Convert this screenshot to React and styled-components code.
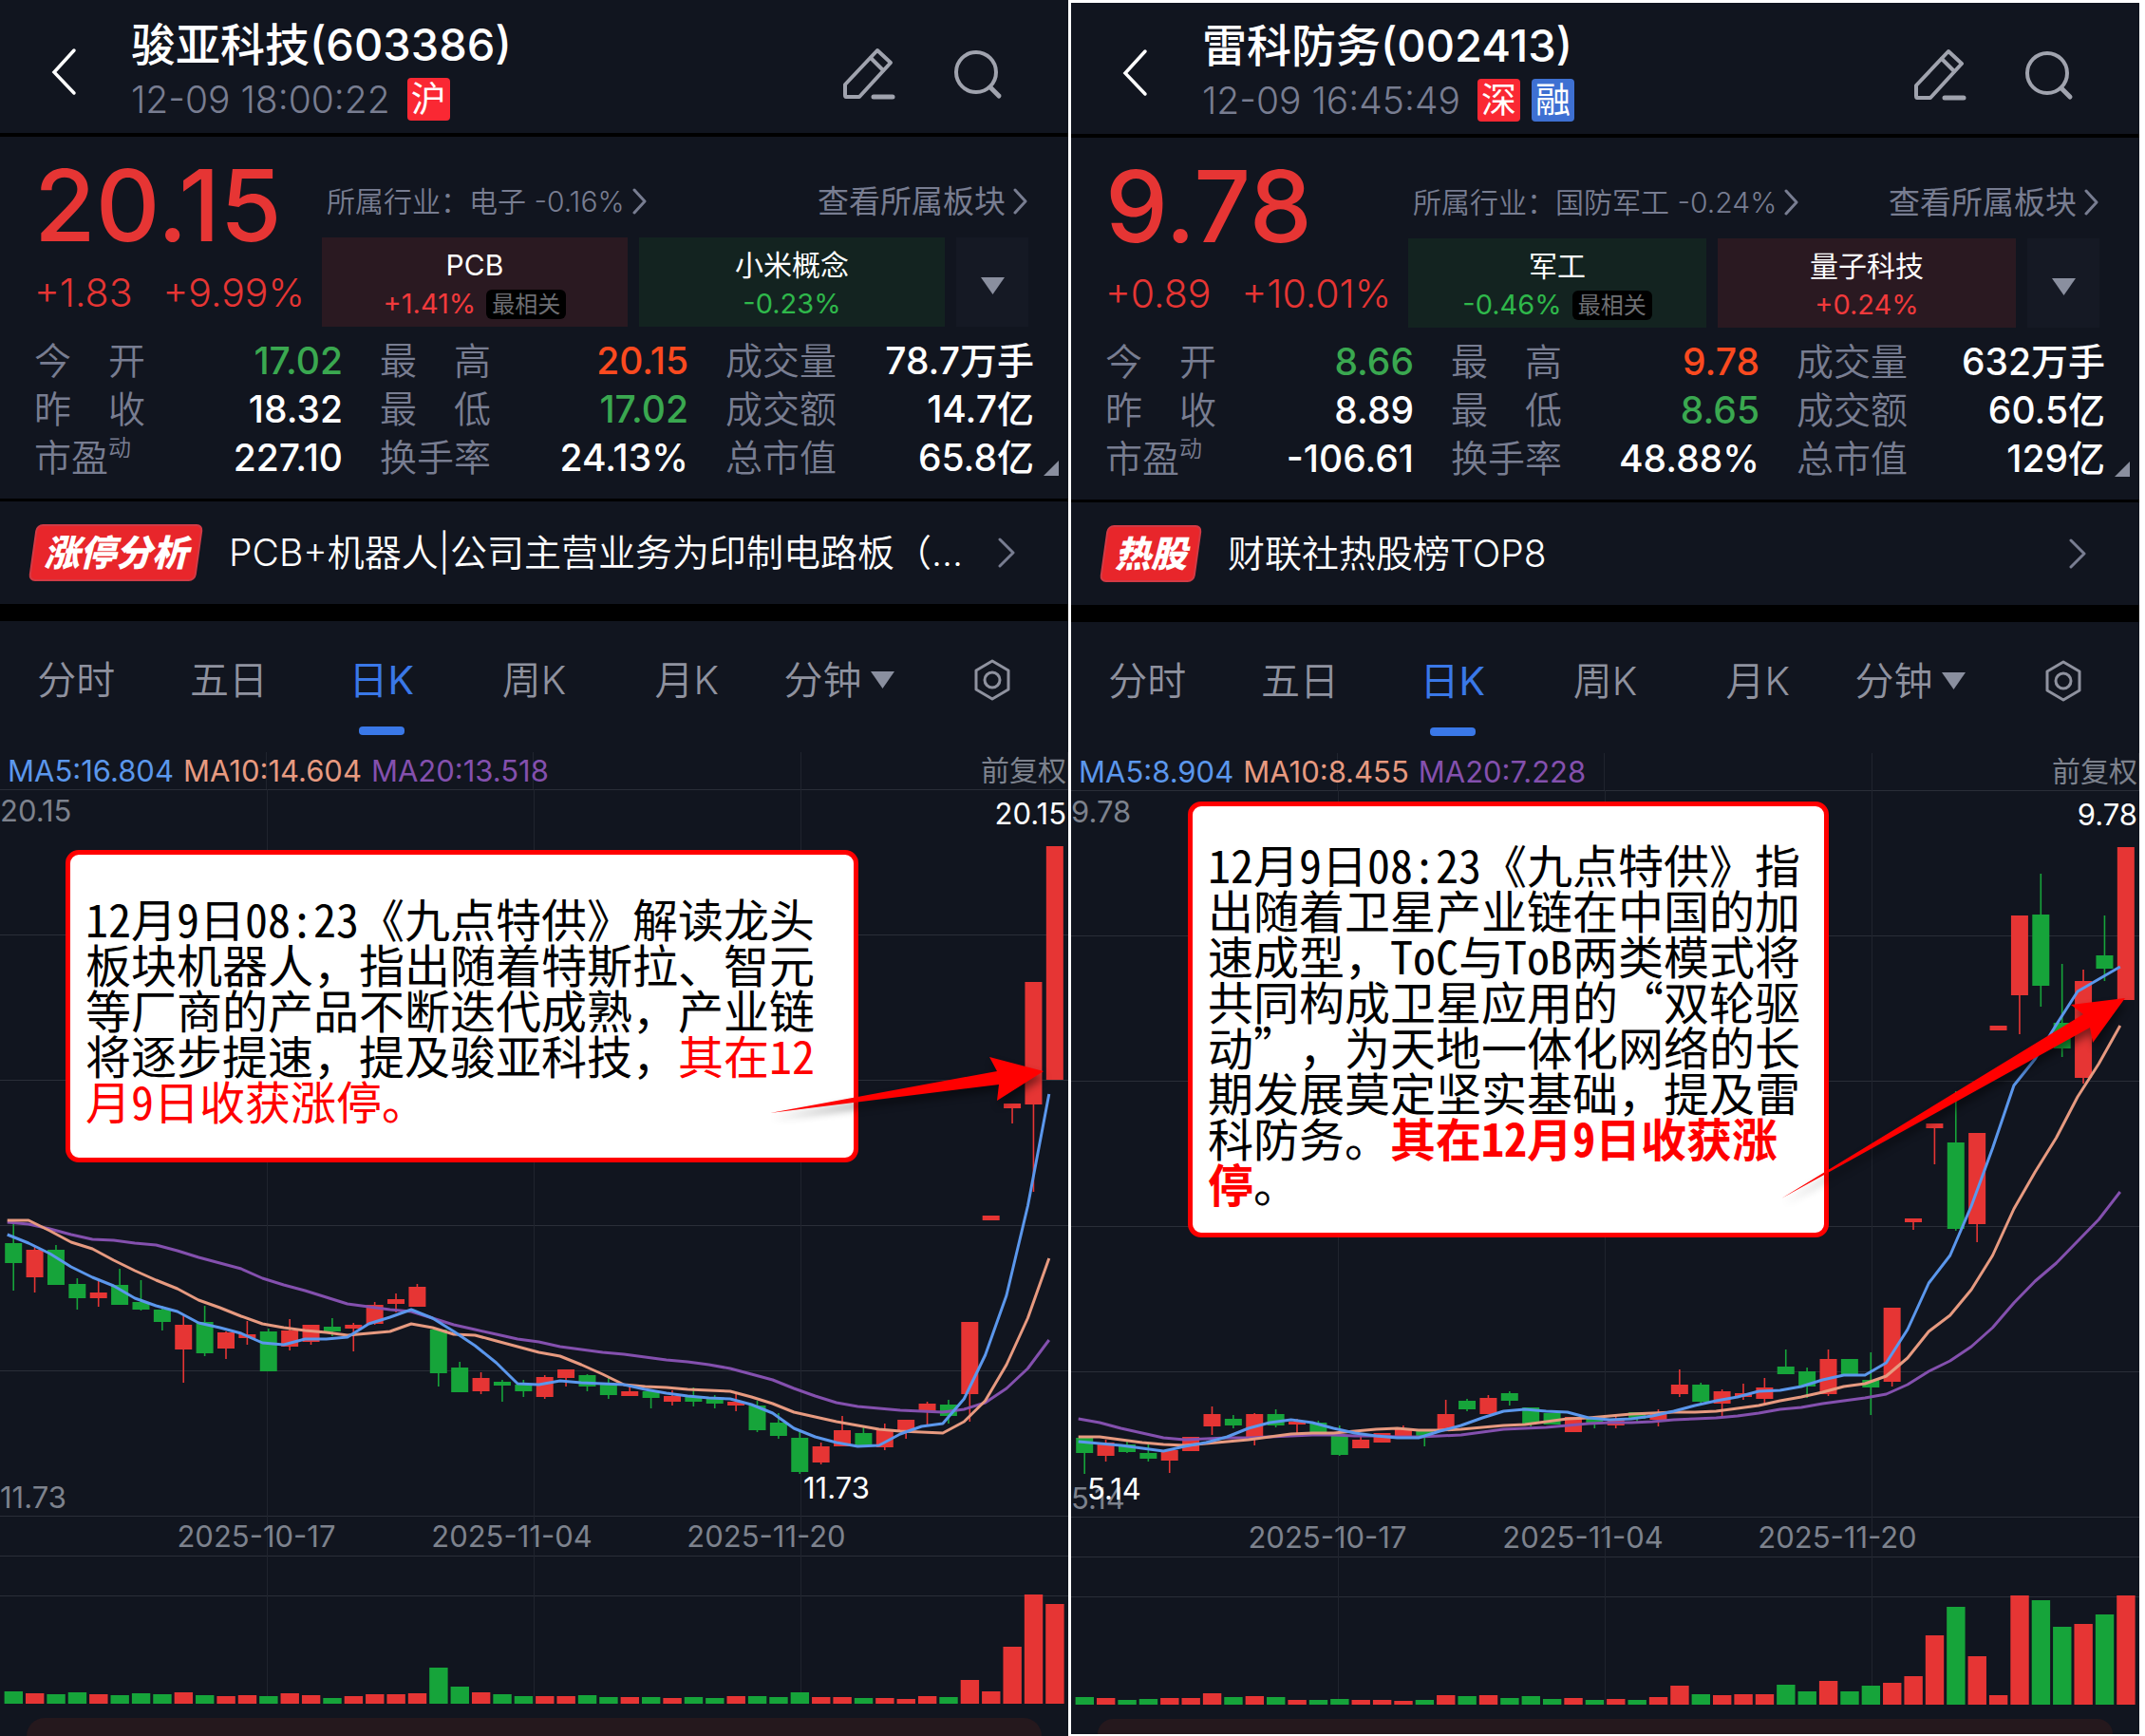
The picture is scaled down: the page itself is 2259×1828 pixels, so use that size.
import React from 'react';
import styled, { createGlobalStyle } from 'styled-components';

const color = {
  bg: '#11151f',
  red: '#e63534',
  hot: '#fb4a1f',
  green: '#3aa850',
  candleGreen: '#16a43a',
  muted: '#787d91',
  tab: '#8f929f',
  axis: '#7d828d',
  grid: '#2a2e38',
  blue: '#3a78e8',
  ma5: '#5b97ec',
  ma10: '#e79a80',
  ma20: '#8450ae',
};

const GlobalStyle = createGlobalStyle`
  * { box-sizing: border-box; }
  body {
    margin: 0;
    background: #fff;
    color: #fff;
    font-family: Inter, "Noto Sans CJK SC", sans-serif;
    text-spacing-trim: space-all;
  }
  button {
    border: 0;
    padding: 0;
    background: none;
    color: inherit;
    font: inherit;
    cursor: pointer;
  }
  a { color: inherit; text-decoration: none; }
  svg { display: block; }
  h1, dl, dd, p { margin: 0; }
`;

const Page = styled.main`
  display: grid;
  grid-template-columns: 1fr 1fr;
  gap: 3px;
  padding-right: 6px;
  min-height: 100vh;
`;

const Panel = styled.section`
  display: flex;
  flex-direction: column;
  min-width: 0;
  overflow: hidden;
  background: ${color.bg};
  margin: ${(p) => (p.$framed ? '3px 0 2px' : '0')};
`;

const Header = styled.header`
  display: flex;
  align-items: center;
  padding: ${(p) => (p.$framed ? 19 : 21)}px 63px 13px 48px;
  border-bottom: 4px solid #000;
`;

const IconButton = styled.button`
  flex: none;
`;

const Heading = styled.div`
  flex: 1;
  margin-left: 50px;
`;

const Title = styled.h1`
  font-size: 47px;
  line-height: 52px;
  font-weight: 450;
`;

const SubLine = styled.div`
  display: flex;
  align-items: center;
  gap: 12px;
  margin-top: 9px;
  color: ${color.muted};
`;

const Time = styled.time`
  margin-right: 6px;
  font-size: 39px;
  line-height: 45px;
  font-weight: 300;
`;

const MarketTag = styled.span`
  width: 45px;
  font-size: 37px;
  line-height: 45px;
  text-align: center;
  border-radius: 4px;
  color: #fff;
  background: ${(p) => (p.$tone === 'blue' ? '#3e70d2' : '#fa2833')};
`;

const Actions = styled.div`
  display: flex;
  gap: 52px;
`;

const Quote = styled.div`
  position: relative;
  padding: 22px 0 18px;
  border-bottom: 3px solid #000;
`;

const Summary = styled.div`
  display: flex;
  gap: 18px;
  padding: 0 42px 0 36px;
`;

const Price = styled.div`
  color: ${color.red};
  font-size: 105px;
  line-height: 100px;
  font-weight: 500;
`;

const Change = styled.div`
  display: flex;
  gap: 32px;
  margin-top: 16px;
  color: ${color.red};
  font-size: 41px;
  line-height: 52px;
  font-weight: 300;
`;

const Sectors = styled.div`
  flex: 1;
  min-width: 0;
  padding-top: 22px;
`;

const SectorLinks = styled.div`
  display: flex;
  justify-content: space-between;
  padding-left: 5px;
  color: ${color.muted};
  line-height: 48px;
`;

const SectorLink = styled.a`
  display: flex;
  align-items: center;
  gap: 8px;
  font-size: ${(p) => (p.$large ? 33 : 30)}px;
  font-weight: ${(p) => (p.$large ? 400 : 350)};
`;

const Cards = styled.div`
  display: flex;
  gap: 12px;
  margin-top: 14px;
`;

const Card = styled.button`
  flex: 1;
  padding: 8px 0 4px;
  background: ${(p) => (p.$up ? '#2a1921' : '#132320')};
  font-size: 30px;
  line-height: 42px;
`;

const CardChange = styled.span`
  display: flex;
  justify-content: center;
  align-items: center;
  gap: 11px;
  line-height: 40px;
  font-size: 29px;
  color: ${(p) => (p.$up ? '#f23a3c' : '#2fb84b')};
`;

const Closest = styled.span`
  padding: 0 6px;
  border-radius: 6px;
  background: #000;
  color: #6d6e72;
  font-size: 24px;
  line-height: 31px;
`;

const MoreButton = styled.button`
  display: grid;
  place-items: center;
  width: 76px;
  padding-top: 8px;
  background: #151924;
`;

const Stats = styled.dl`
  display: grid;
  grid-template-columns: repeat(3, 1fr);
  column-gap: 39px;
  padding: 0 36px 0 36px;
  margin-top: 10px;
`;

const Stat = styled.div`
  display: flex;
  justify-content: space-between;
  font-size: 39px;
  line-height: 51px;
`;

const StatLabel = styled.dt`
  width: 117px;
  color: ${color.muted};
  font-weight: 350;
  text-align-last: ${(p) => (p.$spread ? 'justify' : 'left')};
  white-space: nowrap;
`;

const Small = styled.sup`
  font-size: 24px;
  line-height: 1;
  vertical-align: 16px;
`;

const StatValue = styled.dd`
  color: ${(p) => color[p.$tone] || '#fff'};
  font-weight: 500;
`;

const Corner = styled.svg`
  position: absolute;
  right: 10px;
  bottom: 24px;
`;

const Notice = styled.a`
  display: flex;
  align-items: center;
  height: 108px;
  padding: 0 55px 0 34px;
`;

const NoticeTag = styled.span`
  position: relative;
  z-index: 0;
  padding: 0 12px;
  font-size: 38px;
  line-height: 60px;
  font-weight: 900;
  font-style: italic;
  white-space: nowrap;
  &::before {
    content: '';
    position: absolute;
    z-index: -1;
    inset: 0;
    border: 2px solid #d23a45;
    border-radius: 7px;
    background: #e8262b;
    transform: skewX(-8deg);
  }
`;

const NoticeText = styled.span`
  flex: 1;
  min-width: 0;
  margin-left: 31px;
  font-size: 39px;
  line-height: 56px;
  font-weight: 350;
  white-space: nowrap;
`;

const Tabs = styled.nav`
  display: grid;
  grid-template-columns: repeat(7, 1fr);
  padding: 32px 0 18px;
  border-top: 18px solid #000;
`;

const Tab = styled.button`
  display: flex;
  flex-direction: column;
  align-items: center;
  gap: 19px;
  color: ${(p) => (p.$active ? color.blue : color.tab)};
  font-size: 41px;
  line-height: 60px;
  font-weight: ${(p) => (p.$active ? 400 : 350)};
  &::after {
    content: '';
    width: 48px;
    height: 9px;
    border-radius: 4px;
    background: ${(p) => (p.$active ? color.blue : 'transparent')};
  }
`;

const TabLabel = styled.span`
  display: flex;
  align-items: center;
  gap: 10px;
  height: 60px;
  white-space: nowrap;
`;

const Legend = styled.div`
  display: flex;
  gap: 10px;
  padding: 0 2px 0 8px;
  font-size: 31px;
  line-height: 39px;
  background: repeating-linear-gradient(
    90deg,
    transparent 0 calc(25% - 1px),
    #20242e calc(25% - 1px) 25%
  );
`;

const LegendItem = styled.span`
  color: ${(p) => color[p.$tone]};
`;

const Adjust = styled.span`
  margin-left: auto;
  color: ${color.axis};
  font-size: 30px;
`;

const ChartArea = styled.div`
  position: relative;
`;

const ChartSvg = styled.svg`
  width: 100%;
  height: auto;
`;

const AxisText = styled.text`
  fill: ${(p) => (p.$bright ? '#fff' : color.axis)};
  font-size: 31px;
`;

const Callout = styled.p`
  position: absolute;
  top: ${(p) => p.$top}px;
  left: ${(p) => p.$left}px;
  width: ${(p) => p.$width}px;
  padding: ${(p) => p.$pad};
  border: 5px solid #f00;
  border-radius: 14px;
  background: #fff;
  color: #000;
  font-family: "Noto Sans CJK SC", sans-serif;
  font-size: 48px;
  line-height: 48px;
`;

const HalfWidth = styled.span`
  font-feature-settings: "hwid";
`;

const Mark = styled.span`
  color: #f00;
  font-weight: ${(p) => (p.$bold ? 700 : 400)};
`;

const ArrowSvg = styled.svg`
  position: absolute;
  inset: 0;
  width: 100%;
  height: 100%;
  pointer-events: none;
  filter: drop-shadow(2px 6px 4px rgba(0, 0, 0, 0.45));
`;

const Footer = styled.footer`
  flex: 1 0 16px;
  margin: 0 28px;
  border-radius: 20px 20px 0 0;
  background: #25181d;
`;

const TOP = 831;
const VIEW = '0 831 1125 978';
const STEP = 22.38;
const BASE = 1794;

/* Each candle: direction, body top, body bottom, wick top, wick bottom, volume */
const left = {
  name: '骏亚科技',
  code: '603386',
  time: '12-09 18:00:22',
  tags: [['沪', 'red']],
  price: '20.15',
  change: ['+1.83', '+9.99%'],
  industry: '电子',
  industryChange: '-0.16%',
  cards: [
    { name: 'PCB', change: '+1.41%', up: true, closest: true },
    { name: '小米概念', change: '-0.23%', up: false },
  ],
  stats: [
    ['今开', '17.02', 'green'], ['最高', '20.15', 'hot'], ['成交量', '78.7万手'],
    ['昨收', '18.32'], ['最低', '17.02', 'green'], ['成交额', '14.7亿'],
    ['市盈', '227.10'], ['换手率', '24.13%'], ['总市值', '65.8亿'],
  ],
  notice: ['涨停分析', 'PCB+机器人|公司主营业务为印制电路板（...'],
  ma: ['MA5:16.804', 'MA10:14.604', 'MA20:13.518'],
  high: '20.15',
  low: '11.73',
  lowAt: [846, 1578],
  candles: [
    ['g', 1309, 1330, 1289, 1359, 13], ['r', 1316, 1345, 1313, 1361, 11], ['g', 1316, 1353, 1311, 1353, 10],
    ['g', 1352, 1367, 1346, 1379, 12], ['r', 1361, 1367, 1348, 1376, 10], ['g', 1353, 1374, 1336, 1374, 9],
    ['g', 1371, 1379, 1348, 1380, 11], ['g', 1379, 1392, 1375, 1401, 10], ['r', 1395, 1421, 1384, 1456, 12],
    ['g', 1392, 1425, 1375, 1428, 9], ['r', 1403, 1420, 1402, 1431, 8], ['r', 1405, 1409, 1391, 1416, 9],
    ['g', 1402, 1444, 1399, 1444, 8], ['r', 1401, 1418, 1389, 1422, 11], ['r', 1395, 1413, 1395, 1416, 9],
    ['g', 1397, 1402, 1388, 1407, 6], ['r', 1395, 1399, 1393, 1423, 8], ['r', 1374, 1394, 1371, 1395, 10],
    ['r', 1368, 1373, 1362, 1382, 10], ['r', 1355, 1376, 1352, 1376, 11], ['g', 1400, 1446, 1400, 1460, 38],
    ['g', 1440, 1466, 1434, 1466, 18], ['r', 1451, 1465, 1445, 1468, 12], ['g', 1455, 1459, 1453, 1476, 10],
    ['g', 1458, 1465, 1453, 1471, 8], ['r', 1450, 1471, 1448, 1473, 8], ['r', 1442, 1451, 1442, 1460, 8],
    ['g', 1448, 1460, 1447, 1465, 9], ['g', 1458, 1469, 1450, 1473, 7], ['r', 1465, 1470, 1458, 1470, 7],
    ['g', 1465, 1472, 1463, 1483, 7], ['r', 1470, 1476, 1464, 1480, 6], ['g', 1470, 1476, 1461, 1481, 7],
    ['g', 1473, 1478, 1469, 1483, 6], ['r', 1476, 1480, 1468, 1486, 8], ['g', 1480, 1506, 1475, 1508, 8],
    ['g', 1498, 1512, 1488, 1515, 7], ['g', 1514, 1550, 1507, 1552, 12], ['r', 1523, 1540, 1519, 1542, 7],
    ['r', 1506, 1523, 1491, 1523, 7], ['g', 1509, 1522, 1503, 1522, 6], ['r', 1505, 1524, 1499, 1527, 6],
    ['r', 1495, 1506, 1495, 1515, 5], ['r', 1478, 1486, 1476, 1502, 8], ['g', 1479, 1491, 1474, 1499, 7],
    ['r', 1392, 1468, 1392, 1497, 25], ['r', 1280, 1285, 1280, 1285, 13], ['r', 1162, 1167, 1162, 1183, 60],
    ['r', 1034, 1163, 1034, 1255, 115], ['r', 891, 1137, 891, 1137, 105],
  ],
  ma5: [1300, 1309, 1320, 1334, 1345, 1354, 1367, 1375, 1381, 1393, 1398, 1404, 1414, 1416, 1410, 1410, 1408, 1394, 1387, 1379, 1388, 1402, 1417, 1435, 1457, 1458, 1454, 1456, 1457, 1458, 1463, 1467, 1470, 1472, 1473, 1479, 1488, 1504, 1513, 1519, 1523, 1522, 1510, 1502, 1499, 1473, 1427, 1364, 1270, 1152],
  ma10: [1285, 1285, 1296, 1308, 1315, 1327, 1338, 1348, 1357, 1369, 1377, 1386, 1394, 1398, 1401, 1403, 1406, 1404, 1402, 1394, 1398, 1405, 1406, 1412, 1418, 1424, 1428, 1437, 1447, 1458, 1460, 1461, 1463, 1464, 1465, 1471, 1478, 1487, 1492, 1497, 1501, 1505, 1507, 1508, 1509, 1497, 1475, 1437, 1388, 1325],
  ma20: [1287, 1289, 1294, 1300, 1305, 1306, 1309, 1311, 1317, 1324, 1330, 1336, 1346, 1353, 1359, 1366, 1373, 1376, 1379, 1381, 1388, 1395, 1400, 1405, 1410, 1413, 1418, 1421, 1424, 1426, 1429, 1432, 1434, 1437, 1441, 1447, 1453, 1462, 1470, 1477, 1481, 1483, 1485, 1486, 1487, 1484, 1477, 1462, 1441, 1411],
  arrow: '811,1172 1050,1128 1042,1113 1099,1128 1050,1159 1052,1142',
  callout: { top: 895 - TOP, left: 69, width: 835, pad: '42px 34px 37px 16px' },
  note: ['12月9日08:23《九点特供》解读龙头板块机器人，指出随着特斯拉、智元等厂商的产品不断迭代成熟，产业链将逐步提速，提及骏亚科技，', '其在12月9日收获涨停。', ''],
};

const right = {
  framed: true,
  name: '雷科防务',
  code: '002413',
  time: '12-09 16:45:49',
  tags: [['深', 'red'], ['融', 'blue']],
  price: '9.78',
  change: ['+0.89', '+10.01%'],
  industry: '国防军工',
  industryChange: '-0.24%',
  cards: [
    { name: '军工', change: '-0.46%', up: false, closest: true },
    { name: '量子科技', change: '+0.24%', up: true },
  ],
  stats: [
    ['今开', '8.66', 'green'], ['最高', '9.78', 'hot'], ['成交量', '632万手'],
    ['昨收', '8.89'], ['最低', '8.65', 'green'], ['成交额', '60.5亿'],
    ['市盈', '-106.61'], ['换手率', '48.88%'], ['总市值', '129亿'],
  ],
  notice: ['热股', '财联社热股榜TOP8'],
  ma: ['MA5:8.904', 'MA10:8.455', 'MA20:7.228'],
  high: '9.78',
  low: '5.14',
  lowAt: [17, 1578],
  boldMark: true,
  candles: [
    ['g', 1513, 1529, 1513, 1551, 8], ['r', 1518, 1532, 1515, 1538, 7], ['g', 1520, 1528, 1517, 1529, 5],
    ['g', 1529, 1535, 1519, 1538, 6], ['r', 1526, 1537, 1526, 1550, 7], ['r', 1512, 1527, 1512, 1527, 7],
    ['r', 1488, 1501, 1480, 1510, 12], ['g', 1493, 1500, 1489, 1503, 8], ['r', 1488, 1512, 1487, 1521, 9],
    ['g', 1488, 1500, 1483, 1502, 8], ['r', 1496, 1499, 1493, 1508, 5], ['g', 1497, 1507, 1495, 1507, 5],
    ['g', 1510, 1531, 1500, 1532, 6], ['r', 1515, 1524, 1512, 1524, 5], ['r', 1508, 1518, 1508, 1518, 5],
    ['r', 1504, 1513, 1500, 1513, 4], ['g', 1505, 1512, 1505, 1522, 5], ['r', 1488, 1504, 1473, 1504, 10],
    ['g', 1474, 1483, 1472, 1485, 9], ['r', 1471, 1488, 1468, 1488, 10], ['g', 1466, 1474, 1464, 1479, 7],
    ['g', 1481, 1498, 1481, 1501, 9], ['g', 1487, 1499, 1487, 1499, 6], ['r', 1491, 1507, 1491, 1507, 7],
    ['g', 1492, 1497, 1492, 1503, 5], ['r', 1493, 1500, 1489, 1503, 6], ['g', 1486, 1493, 1486, 1496, 5],
    ['r', 1486, 1494, 1483, 1501, 8], ['r', 1457, 1467, 1441, 1470, 20], ['g', 1457, 1475, 1455, 1477, 11],
    ['r', 1464, 1477, 1462, 1491, 10], ['r', 1466, 1470, 1456, 1473, 11], ['r', 1460, 1472, 1450, 1477, 11],
    ['g', 1438, 1446, 1420, 1446, 21], ['g', 1443, 1459, 1439, 1471, 14], ['r', 1430, 1467, 1420, 1469, 25],
    ['g', 1430, 1446, 1430, 1448, 14], ['g', 1452, 1460, 1423, 1489, 20], ['r', 1376, 1454, 1376, 1459, 23],
    ['r', 1282, 1286, 1282, 1294, 30], ['r', 1182, 1187, 1182, 1225, 73], ['g', 1202, 1293, 1148, 1295, 103],
    ['r', 1192, 1288, 1192, 1307, 51], ['r', 1079, 1084, 1079, 1084, 10], ['r', 963, 1047, 963, 1088, 115],
    ['g', 962, 1037, 919, 1059, 110], ['g', 1076, 1103, 1014, 1112, 82], ['r', 1032, 1134, 1020, 1140, 85],
    ['g', 1005, 1019, 963, 1032, 95], ['r', 891, 1052, 891, 1052, 115],
  ],
  ma5: [1517, 1519, 1521, 1524, 1527, 1522, 1518, 1512, 1503, 1497, 1494, 1497, 1503, 1508, 1511, 1513, 1513, 1506, 1500, 1492, 1485, 1483, 1485, 1486, 1492, 1494, 1493, 1490, 1485, 1479, 1474, 1470, 1464, 1463, 1459, 1452, 1447, 1447, 1434, 1399, 1350, 1321, 1269, 1208, 1142, 1114, 1078, 1043, 1030, 1017],
  ma10: [1512, 1512, 1515, 1518, 1520, 1521, 1519, 1517, 1515, 1512, 1509, 1508, 1508, 1506, 1504, 1503, 1505, 1505, 1504, 1502, 1500, 1499, 1496, 1493, 1492, 1490, 1488, 1487, 1486, 1486, 1485, 1482, 1479, 1474, 1470, 1465, 1459, 1456, 1448, 1429, 1401, 1384, 1357, 1321, 1272, 1233, 1197, 1154, 1119, 1079],
  ma20: [1493, 1497, 1503, 1508, 1513, 1515, 1514, 1513, 1513, 1512, 1511, 1510, 1510, 1511, 1511, 1512, 1512, 1511, 1510, 1507, 1504, 1503, 1502, 1500, 1498, 1497, 1497, 1496, 1494, 1493, 1492, 1490, 1487, 1483, 1481, 1477, 1474, 1471, 1467, 1457, 1443, 1432, 1417, 1397, 1371, 1348, 1329, 1306, 1283, 1254],
  arrow: '748,1261 1066,1067 1053,1057 1110,1050 1076,1097 1073,1081',
  callout: { top: 843 - TOP, left: 123, width: 675, pad: '36px 24px 29px 16px' },
  note: ['12月9日08:23《九点特供》指出随着卫星产业链在中国的加速成型，ToC与ToB两类模式将共同构成卫星应用的“双轮驱动”，为天地一体化网络的长期发展莫定坚实基础，提及雷科防务。', '其在12月9日收获涨停', '。'],
};

const Chevron = ({ w, h, stroke = color.muted, width = 3 }) => (
  <svg width={w} height={h} viewBox={`0 0 ${w} ${h}`} fill="none" stroke={stroke} strokeWidth={width} aria-hidden="true">
    <path d={`M2 2 L${w - 3} ${h / 2} L2 ${h - 2}`} strokeLinecap="round" strokeLinejoin="round" />
  </svg>
);

const Triangle = ({ w, h }) => (
  <svg width={w} height={h} viewBox={`0 0 ${w} ${h}`} aria-hidden="true">
    <path d={`M0 0H${w}L${w / 2} ${h}Z`} fill="#8a8f9f" />
  </svg>
);

const BackIcon = () => (
  <svg width="40" height="56" viewBox="0 0 40 56" fill="none" stroke="#fff" strokeWidth="3.5" aria-hidden="true">
    <path d="M30 7 9 30 30 52" strokeLinecap="round" />
  </svg>
);

const PencilIcon = () => (
  <svg width="64" height="64" viewBox="0 0 64 64" fill="none" stroke="#a0a3ae" strokeWidth="4" strokeLinejoin="round" strokeLinecap="round" aria-hidden="true">
    <path d="M42 11 56 24 23 60H9Q8 60 8 58V47Z" />
    <path d="M35 19 48 32" />
    <path d="M38 60H58" strokeWidth="5" />
  </svg>
);

const SearchIcon = () => (
  <svg width="64" height="64" viewBox="0 0 64 64" fill="none" stroke="#a0a3ae" strokeWidth="4" strokeLinecap="round" aria-hidden="true">
    <circle cx="30" cy="34" r="21" />
    <path d="M45 50 54 59" strokeWidth="5" />
  </svg>
);

const HexIcon = () => (
  <svg width="42" height="44" viewBox="0 0 42 44" fill="none" stroke={color.tab} strokeWidth="3" strokeLinejoin="round" aria-hidden="true">
    <path d="M21 2 38 12V32L21 42 4 32V12Z" />
    <circle cx="21" cy="22" r="8" />
  </svg>
);

const halve = (text) =>
  text.split(/([0-9A-Za-z:]+)/).map((part, i) => (i % 2 ? <HalfWidth key={i}>{part}</HalfWidth> : part));

const linePoints = (values) => values.map((y, i) => `${(7.7 + i * 22.39).toFixed(1)},${y}`).join(' ');

function Candles({ data }) {
  return data.map(([dir, top, bottom, high, low, volume], i) => {
    const x = 14.2 + i * STEP;
    const fill = dir === 'r' ? color.red : color.candleGreen;
    return (
      <g key={i} fill={fill}>
        <rect x={x - 0.8} y={high} width="1.6" height={low - high} />
        <rect x={x - 9} y={top} width="18" height={bottom - top} />
        <rect x={x - 9.6} y={BASE - volume} width="19.4" height={volume} />
      </g>
    );
  });
}

function Chart({ stock }) {
  return (
    <ChartArea>
      <ChartSvg viewBox={VIEW} role="img" aria-label={`${stock.name} 日K`}>
        <g stroke={color.grid} strokeWidth="1">
          {[831.5, 984.5, 1137.5, 1290.5, 1443.5, 1596.5, 1638.5, 1680.5].map((y) => (
            <path key={y} d={`M0 ${y}H1125`} />
          ))}
          {[281.5, 562.5, 843.5].map((x) => (
            <path key={x} d={`M${x} 831V${BASE}`} stroke="#20242e" />
          ))}
        </g>
        <AxisText x="0" y="865">{stock.high}</AxisText>
        <AxisText x="0" y="1588">{stock.low}</AxisText>
        <Candles data={stock.candles} />
        <g fill="none" strokeWidth="3" strokeLinejoin="round">
          <polyline points={linePoints(stock.ma20)} stroke={color.ma20} />
          <polyline points={linePoints(stock.ma10)} stroke={color.ma10} />
          <polyline points={linePoints(stock.ma5)} stroke={color.ma5} />
        </g>
        <AxisText $bright x="1123" y="868" textAnchor="end">{stock.high}</AxisText>
        <AxisText $bright x={stock.lowAt[0]} y={stock.lowAt[1]}>{stock.low}</AxisText>
        <AxisText x="270" y="1629" textAnchor="middle">2025-10-17</AxisText>
        <AxisText x="539" y="1629" textAnchor="middle">2025-11-04</AxisText>
        <AxisText x="807" y="1629" textAnchor="middle">2025-11-20</AxisText>
      </ChartSvg>
      <Callout $top={stock.callout.top} $left={stock.callout.left} $width={stock.callout.width} $pad={stock.callout.pad}>
        {halve(stock.note[0])}
        <Mark $bold={stock.boldMark}>{halve(stock.note[1])}</Mark>
        {stock.note[2]}
      </Callout>
      <ArrowSvg viewBox={VIEW} aria-hidden="true">
        <polygon points={stock.arrow} fill="#f00" />
      </ArrowSvg>
    </ChartArea>
  );
}

function StockPanel({ stock }) {
  return (
    <Panel $framed={stock.framed}>
      <Header $framed={stock.framed}>
        <IconButton aria-label="返回"><BackIcon /></IconButton>
        <Heading>
          <Title>{stock.name}({stock.code})</Title>
          <SubLine>
            <Time>{stock.time}</Time>
            {stock.tags.map(([text, tone]) => (
              <MarketTag key={text} $tone={tone}>{text}</MarketTag>
            ))}
          </SubLine>
        </Heading>
        <Actions>
          <IconButton aria-label="编辑"><PencilIcon /></IconButton>
          <IconButton aria-label="搜索"><SearchIcon /></IconButton>
        </Actions>
      </Header>

      <Quote>
        <Summary>
          <div>
            <Price>{stock.price}</Price>
            <Change>
              <span>{stock.change[0]}</span>
              <span>{stock.change[1]}</span>
            </Change>
          </div>
          <Sectors>
            <SectorLinks>
              <SectorLink href="#industry">
                <span>所属行业：{stock.industry} {stock.industryChange}</span>
                <Chevron w={16} h={28} />
              </SectorLink>
              <SectorLink href="#boards" $large>
                <span>查看所属板块</span>
                <Chevron w={16} h={28} />
              </SectorLink>
            </SectorLinks>
            <Cards>
              {stock.cards.map((card) => (
                <Card key={card.name} $up={card.up}>
                  {card.name}
                  <CardChange $up={card.up}>
                    {card.change}
                    {card.closest && <Closest>最相关</Closest>}
                  </CardChange>
                </Card>
              ))}
              <MoreButton aria-label="更多板块"><Triangle w={25} h={18} /></MoreButton>
            </Cards>
          </Sectors>
        </Summary>
        <Stats>
          {stock.stats.map(([label, value, tone]) => (
            <Stat key={label}>
              <StatLabel $spread={label.length === 2 && label !== '市盈'}>
                {label}
                {label === '市盈' && <Small>动</Small>}
              </StatLabel>
              <StatValue $tone={tone}>{value}</StatValue>
            </Stat>
          ))}
        </Stats>
        <Corner width="16" height="16" viewBox="0 0 16 16" aria-hidden="true">
          <path d="M16 0V16H0Z" fill="#8a8f9f" />
        </Corner>
      </Quote>

      <Notice href="#notice">
        <NoticeTag>{stock.notice[0]}</NoticeTag>
        <NoticeText>{stock.notice[1]}</NoticeText>
        <Chevron w={19} h={32} />
      </Notice>

      <Tabs>
        {['分时', '五日', '日K', '周K', '月K'].map((name) => (
          <Tab key={name} $active={name === '日K'}>
            <TabLabel>{name}</TabLabel>
          </Tab>
        ))}
        <Tab>
          <TabLabel>分钟<Triangle w={25} h={18} /></TabLabel>
        </Tab>
        <Tab aria-label="设置">
          <TabLabel><HexIcon /></TabLabel>
        </Tab>
      </Tabs>

      <Legend>
        <LegendItem $tone="ma5">{stock.ma[0]}</LegendItem>
        <LegendItem $tone="ma10">{stock.ma[1]}</LegendItem>
        <LegendItem $tone="ma20">{stock.ma[2]}</LegendItem>
        <Adjust>前复权</Adjust>
      </Legend>
      <Chart stock={stock} />
      <Footer />
    </Panel>
  );
}

export default function App() {
  return (
    <>
      <GlobalStyle />
      <Page lang="zh-CN">
        <StockPanel stock={left} />
        <StockPanel stock={right} />
      </Page>
    </>
  );
}
